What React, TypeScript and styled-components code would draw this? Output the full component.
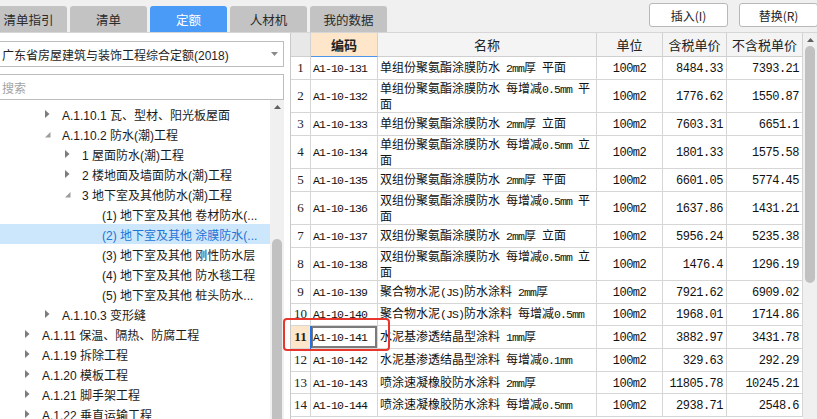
import React from 'react';
import styled, { createGlobalStyle } from 'styled-components';

const GlobalStyle = createGlobalStyle`
  html, body {
    margin: 0;
    padding: 0;
    background: #ffffff;
  }
  body {
    font-family: "Liberation Sans", "Noto Sans CJK SC", sans-serif;
  }
  * {
    box-sizing: border-box;
  }
`;

interface TreeNode {
  label: string;
  level: number;
  toggle?: 'open' | 'closed';
  selected?: boolean;
}

interface Quota {
  code: string;
  name: string;
  taxed: string;
  untaxed: string;
}

const tabs = ['清单指引', '清单', '定额', '人材机', '我的数据'];

const tree: TreeNode[] = [
  { label: 'A.1.10.1 瓦、型材、阳光板屋面', level: 1, toggle: 'closed' },
  { label: 'A.1.10.2 防水(潮)工程', level: 1, toggle: 'open' },
  { label: '1 屋面防水(潮)工程', level: 2, toggle: 'closed' },
  { label: '2 楼地面及墙面防水(潮)工程', level: 2, toggle: 'closed' },
  { label: '3 地下室及其他防水(潮)工程', level: 2, toggle: 'open' },
  { label: '(1) 地下室及其他 卷材防水(...', level: 3 },
  { label: '(2) 地下室及其他 涂膜防水(...', level: 3, selected: true },
  { label: '(3) 地下室及其他 刚性防水层', level: 3 },
  { label: '(4) 地下室及其他 防水毯工程', level: 3 },
  { label: '(5) 地下室及其他 桩头防水...', level: 3 },
  { label: 'A.1.10.3 变形缝', level: 1, toggle: 'closed' },
  { label: 'A.1.11 保温、隔热、防腐工程', level: 0, toggle: 'closed' },
  { label: 'A.1.19 拆除工程', level: 0, toggle: 'closed' },
  { label: 'A.1.20 模板工程', level: 0, toggle: 'closed' },
  { label: 'A.1.21 脚手架工程', level: 0, toggle: 'closed' },
  { label: 'A.1.22 垂直运输工程', level: 0, toggle: 'closed' },
];

const quotas: Quota[] = [
  { code: 'A1-10-131', name: '单组份聚氨酯涂膜防水 2mm厚 平面', taxed: '8484.33', untaxed: '7393.21' },
  { code: 'A1-10-132', name: '单组份聚氨酯涂膜防水 每增减0.5mm 平\n面', taxed: '1776.62', untaxed: '1550.87' },
  { code: 'A1-10-133', name: '单组份聚氨酯涂膜防水 2mm厚 立面', taxed: '7603.31', untaxed: '6651.1' },
  { code: 'A1-10-134', name: '单组份聚氨酯涂膜防水 每增减0.5mm 立\n面', taxed: '1801.33', untaxed: '1575.58' },
  { code: 'A1-10-135', name: '双组份聚氨酯涂膜防水 2mm厚 平面', taxed: '6601.05', untaxed: '5774.45' },
  { code: 'A1-10-136', name: '双组份聚氨酯涂膜防水 每增减0.5mm 平\n面', taxed: '1637.86', untaxed: '1431.21' },
  { code: 'A1-10-137', name: '双组份聚氨酯涂膜防水 2mm厚 立面', taxed: '5956.24', untaxed: '5235.38' },
  { code: 'A1-10-138', name: '双组份聚氨酯涂膜防水 每增减0.5mm 立\n面', taxed: '1476.4', untaxed: '1296.19' },
  { code: 'A1-10-139', name: '聚合物水泥(JS)防水涂料 2mm厚', taxed: '7921.62', untaxed: '6909.02' },
  { code: 'A1-10-140', name: '聚合物水泥(JS)防水涂料 每增减0.5mm', taxed: '1968.01', untaxed: '1714.86' },
  { code: 'A1-10-141', name: '水泥基渗透结晶型涂料 1mm厚', taxed: '3882.97', untaxed: '3431.78' },
  { code: 'A1-10-142', name: '水泥基渗透结晶型涂料 每增减0.1mm', taxed: '329.63', untaxed: '292.29' },
  { code: 'A1-10-143', name: '喷涂速凝橡胶防水涂料 2mm厚', taxed: '11805.78', untaxed: '10245.21' },
  { code: 'A1-10-144', name: '喷涂速凝橡胶防水涂料 每增减0.5mm', taxed: '2938.71', untaxed: '2548.6' },
];

// row number, 编码, 名称, 单位, 含税单价, 不含税单价
const COLS = [20, 67, 219, 66, 64, 76];
const ACTIVE_ROW = 10;

const Page = styled.div`
  position: relative;
  width: 817px;
  height: 419px;
  overflow: hidden;
  display: flex;
  flex-direction: column;
  background: #ffffff;
`;

const TopBar = styled.div`
  flex: none;
  height: 33px;
  display: flex;
  justify-content: space-between;
  background: #f0f0f0;
  border-bottom: 1px solid #d6d6d6;
`;

const Tabs = styled.div`
  display: flex;
  align-items: flex-end;
  gap: 3px;
  margin-left: -10px;
`;

const Tab = styled.div<{ $active?: boolean }>`
  width: 77px;
  height: 26px;
  display: flex;
  align-items: center;
  justify-content: center;
  border-radius: 3px 3px 0 0;
  font-family: "Noto Sans CJK SC", sans-serif;
  font-size: 12.5px;
  color: ${(p) => (p.$active ? '#ffffff' : '#2a2a2a')};
  background: ${(p) => (p.$active ? '#4a9af7' : '#c3c3c3')};
`;

const Actions = styled.div`
  display: flex;
  gap: 11px;
  padding-top: 3px;
  margin-right: -1px;
`;

const ActionButton = styled.button`
  width: 79px;
  height: 24px;
  padding: 0;
  background: #ffffff;
  border: 1px solid #b8b8b8;
  border-radius: 3px;
  font-family: "Noto Sans CJK SC", sans-serif;
  font-size: 12px;
  color: #222222;
`;

const Body = styled.div`
  flex: 1;
  min-height: 0;
  display: flex;
`;

const LeftPanel = styled.div`
  flex: none;
  width: 284px;
  display: flex;
  flex-direction: column;
`;

const Select = styled.div`
  flex: none;
  width: 290px;
  height: 26px;
  margin: 8px 0 0 -6px;
  padding: 0 5px 0 7px;
  display: flex;
  align-items: center;
  justify-content: space-between;
  border: 1px solid #bdbdbd;
  font-size: 12px;
  color: #1e1e1e;
`;

const SearchInput = styled.input`
  flex: none;
  width: 290px;
  height: 26px;
  margin: 7px 0 0 -6px;
  padding: 0 0 0 7px;
  border: 1px solid #bdbdbd;
  outline: none;
  font-family: "Noto Sans CJK SC", sans-serif;
  font-size: 12px;
  &::placeholder {
    color: #a3a3a3;
  }
`;

const TreeArea = styled.div`
  flex: 1;
  min-height: 0;
  display: flex;
`;

const TreeList = styled.div`
  flex: 1;
  padding-top: 4px;
  overflow: hidden;
`;

const TreeRow = styled.div<{ $level: number; $selected?: boolean }>`
  height: 20px;
  display: flex;
  align-items: center;
  padding-left: ${(p) => 25 + p.$level * 20}px;
  background: ${(p) => (p.$selected ? '#cce7fb' : 'transparent')};
  color: ${(p) => (p.$selected ? '#1d74d6' : '#1a1a1a')};
  font-size: 12px;
  white-space: nowrap;
`;

const ToggleSlot = styled.span`
  flex: none;
  width: 17px;
  display: flex;
  align-items: center;
`;

const ScrollTrack = styled.div`
  flex: none;
  width: 14px;
  display: flex;
  flex-direction: column;
  align-items: center;
  background: #f0f0f0;
`;

const ScrollArrow = styled.div<{ $h: number }>`
  flex: none;
  height: ${(p) => p.$h}px;
  display: flex;
  align-items: center;
  justify-content: center;
`;

const ScrollThumb = styled.div<{ $offset: number; $size: number }>`
  flex: none;
  width: 10px;
  margin-top: ${(p) => p.$offset}px;
  height: ${(p) => p.$size}px;
  border-radius: 5px;
  background: #c1c1c1;
`;

const Splitter = styled.div`
  flex: none;
  width: 6px;
  background: #ffffff;
`;

const TableArea = styled.div`
  flex: 1;
  min-width: 0;
  display: flex;
`;

const Grid = styled.div`
  flex: none;
  width: 513px;
  border-left: 1px solid #c9c9c9;
  overflow: hidden;
`;

const Row = styled.div<{ $h: number }>`
  display: flex;
  height: ${(p) => p.$h}px;
`;

const HeaderCell = styled.div<{ $w: number; $corner?: boolean; $sorted?: boolean }>`
  flex: none;
  width: ${(p) => p.$w}px;
  height: 100%;
  display: flex;
  align-items: center;
  justify-content: center;
  border-right: 1px solid #d2d2d2;
  border-bottom: 1px solid ${(p) => (p.$sorted ? '#4c95ea' : '#cfcfcf')};
  background: ${(p) => (p.$corner ? '#e8e8e8' : p.$sorted ? '#fde6c9' : '#f4f4f4')};
  font-family: "Noto Sans CJK SC", sans-serif;
  font-size: 13px;
  font-weight: ${(p) => (p.$sorted ? 700 : 400)};
  color: #222222;
`;

const Cell = styled.div<{ $w: number; $align?: 'left' | 'center' | 'right'; $selected?: boolean }>`
  flex: none;
  width: ${(p) => p.$w}px;
  height: 100%;
  display: flex;
  align-items: center;
  justify-content: ${(p) =>
    p.$align === 'right' ? 'flex-end' : p.$align === 'center' ? 'center' : 'flex-start'};
  padding: ${(p) => (p.$align === 'right' ? '0 3px 0 0' : p.$align === 'center' ? '0' : '0 0 0 2px')};
  border-right: 1px solid #d6d6d6;
  border-bottom: 1px solid #d6d6d6;
  overflow: hidden;
  font-family: "Noto Sans CJK SC", sans-serif;
  font-size: 12px;
  color: #111111;
  box-shadow: ${(p) => (p.$selected ? '-1px 0 0 #2270e6, inset 1px 0 0 #2270e6, inset 0 0 0 2px #7b7b7b' : 'none')};
`;

const RowNumber = styled.div<{ $w: number; $active?: boolean }>`
  flex: none;
  width: ${(p) => p.$w}px;
  height: 100%;
  display: flex;
  align-items: center;
  justify-content: center;
  border-right: 1px solid #d6d6d6;
  border-bottom: 1px solid #d6d6d6;
  background: ${(p) => (p.$active ? '#fde6c9' : '#ffffff')};
  font-family: "Liberation Serif", serif;
  font-size: 13px;
  font-weight: ${(p) => (p.$active ? 700 : 400)};
  color: #222222;
`;

const CellText = styled.div`
  white-space: pre;
  line-height: 14px;
`;

const Latin = styled.span<{ $wide?: boolean }>`
  font-family: "Liberation Mono", monospace;
  font-size: ${(p) => (p.$wide ? 12 : 11.5)}px;
  letter-spacing: ${(p) => (p.$wide ? -0.5 : -0.9)}px;
`;

const Callout = styled.div`
  position: absolute;
  left: 283px;
  top: 318px;
  width: 107px;
  height: 33px;
  border: 2px solid #e8362c;
  border-radius: 4px;
  pointer-events: none;
`;

function mixed(text: string, wide?: boolean) {
  return text.split(/([\x20-\x7e]+)/).map((part, i) =>
    /^[\x20-\x7e]+$/.test(part) ? (
      <Latin key={i} $wide={wide}>
        {part}
      </Latin>
    ) : (
      part
    )
  );
}

const Toggle = ({ state }: { state?: 'open' | 'closed' }) => {
  if (state === 'closed') {
    return (
      <svg width="5" height="8" viewBox="0 0 5 8">
        <polygon points="0,0 4.5,4 0,8" fill="#7c7c7c" />
      </svg>
    );
  }
  if (state === 'open') {
    return (
      <svg width="6" height="6" viewBox="0 0 6 6" style={{ marginTop: 2 }}>
        <polygon points="5.5,0 5.5,5.5 0,5.5" fill="#9c9c9c" />
      </svg>
    );
  }
  return null;
};

const UpArrow = () => (
  <svg width="7" height="4" viewBox="0 0 7 4">
    <polygon points="3.5,0 7,4 0,4" fill="#606060" />
  </svg>
);

export default function App() {
  return (
    <Page>
      <GlobalStyle />
      <TopBar>
        <Tabs>
          {tabs.map((t) => (
            <Tab key={t} $active={t === '定额'}>
              {t}
            </Tab>
          ))}
        </Tabs>
        <Actions>
          <ActionButton>插入(I)</ActionButton>
          <ActionButton>替换(R)</ActionButton>
        </Actions>
      </TopBar>

      <Body>
        <LeftPanel>
          <Select>
            <span>广东省房屋建筑与装饰工程综合定额(2018)</span>
            <svg width="7" height="4" viewBox="0 0 7 4">
              <polygon points="0,0 7,0 3.5,4" fill="#8a8a8a" />
            </svg>
          </Select>
          <SearchInput placeholder="搜索" />
          <TreeArea>
            <TreeList>
              {tree.map((n) => (
                <TreeRow key={n.label} $level={n.level} $selected={n.selected}>
                  <ToggleSlot>
                    <Toggle state={n.toggle} />
                  </ToggleSlot>
                  {n.label}
                </TreeRow>
              ))}
            </TreeList>
            <ScrollTrack>
              <ScrollArrow $h={14}>
                <UpArrow />
              </ScrollArrow>
              <ScrollThumb $offset={125} $size={200} />
            </ScrollTrack>
          </TreeArea>
        </LeftPanel>

        <Splitter />

        <TableArea>
          <Grid>
            <Row $h={24}>
              <HeaderCell $w={COLS[0]} $corner />
              <HeaderCell $w={COLS[1]} $sorted>
                编码
              </HeaderCell>
              <HeaderCell $w={COLS[2]}>名称</HeaderCell>
              <HeaderCell $w={COLS[3]}>单位</HeaderCell>
              <HeaderCell $w={COLS[4]}>含税单价</HeaderCell>
              <HeaderCell $w={COLS[5]}>不含税单价</HeaderCell>
            </Row>
            {quotas.map((q, i) => (
              <Row key={q.code} $h={q.name.includes('\n') ? 33.3 : 22.7}>
                <RowNumber $w={COLS[0]} $active={i === ACTIVE_ROW}>
                  {i + 1}
                </RowNumber>
                <Cell $w={COLS[1]} $selected={i === ACTIVE_ROW}>
                  <CellText>{mixed(q.code)}</CellText>
                </Cell>
                <Cell $w={COLS[2]}>
                  <CellText>{mixed(q.name)}</CellText>
                </Cell>
                <Cell $w={COLS[3]} $align="center">
                  <CellText>{mixed('100m2', true)}</CellText>
                </Cell>
                <Cell $w={COLS[4]} $align="right">
                  <CellText>{mixed(q.taxed, true)}</CellText>
                </Cell>
                <Cell $w={COLS[5]} $align="right">
                  <CellText>{mixed(q.untaxed, true)}</CellText>
                </Cell>
              </Row>
            ))}
          </Grid>
          <ScrollTrack>
            <ScrollArrow $h={13}>
              <UpArrow />
            </ScrollArrow>
            <ScrollThumb $offset={0} $size={237} />
          </ScrollTrack>
        </TableArea>
      </Body>

      <Callout />
    </Page>
  );
}
